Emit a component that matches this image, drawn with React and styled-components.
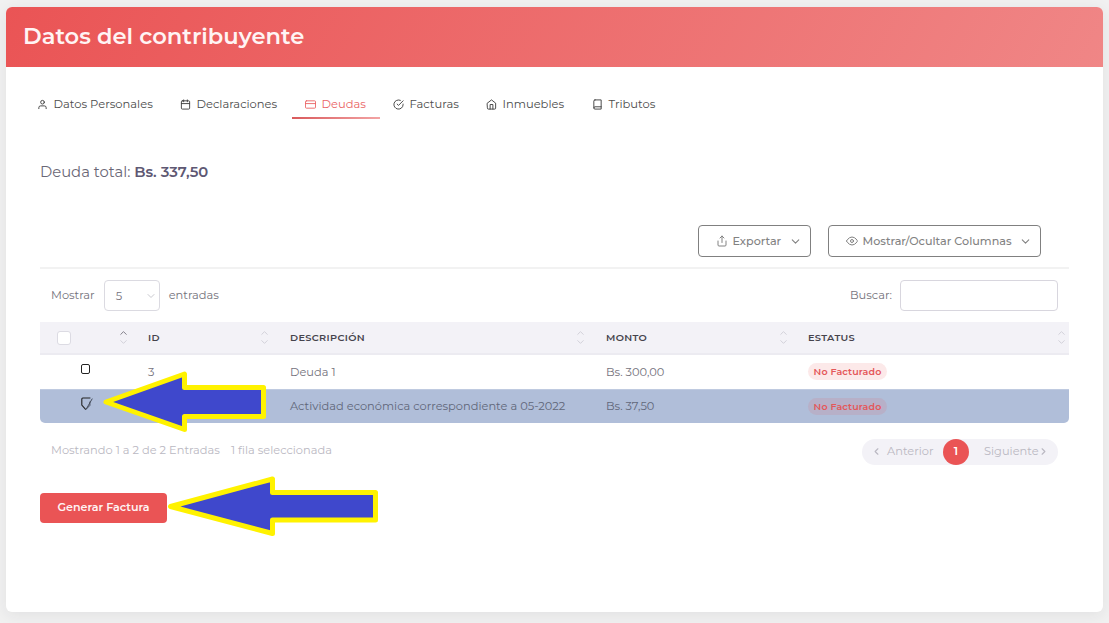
import React from "react";
import styled, { createGlobalStyle, css } from "styled-components";
import {
  FiUser,
  FiCalendar,
  FiCreditCard,
  FiCheckCircle,
  FiHome,
  FiBook,
  FiShare,
  FiEye,
  FiChevronDown,
  FiChevronUp,
  FiChevronLeft,
  FiChevronRight,
} from "react-icons/fi";

const GlobalStyle = createGlobalStyle`
  * { box-sizing: border-box; }
  body {
    margin: 0;
    background: #f1f1f1;
    font-family: Montserrat, Inter, "Liberation Sans", sans-serif;
    font-size: 11.42px;
    color: #74727c;
  }
`;

const Page = styled.div`
  height: 623px;
  padding: 7px 6px 11px;
  overflow: hidden;
`;

const Card = styled.main`
  height: 605px;
  background: #fff;
  border-radius: 6px;
  box-shadow: 0 3px 16px rgba(34, 41, 47, 0.08);
`;

const Header = styled.header`
  height: 60px;
  padding: 0 17px 3px;
  display: flex;
  align-items: center;
  border-radius: 6px 6px 0 0;
  background: linear-gradient(118deg, #ea5455, #f08686);
`;

const Title = styled.h1`
  margin: 0;
  font-size: 22.6px;
  line-height: 30px;
  font-weight: 600;
  color: #fff4f4;
`;

const Tabs = styled.nav`
  display: flex;
  padding: 22px 18px 0;
`;

const Tab = styled.a`
  width: ${(p) => p.$w}px;
  height: 30px;
  padding: 2px 0 0 13px;
  display: flex;
  align-items: center;
  gap: 5.5px;
  font-size: 11.5px;
  color: #4c4c4c;
  border-bottom: 2px solid transparent;
  svg { width: 11px; height: 11px; flex: none; color: #3c3c3c; }
  ${(p) =>
    p.$active &&
    css`
      color: #ea6465;
      border-image: linear-gradient(90deg, #d9595b, #f3a5a5) 1;
      svg { color: #ea6465; }
    `}
`;

const Body = styled.section`
  padding: 0 34px;
`;

const Total = styled.p`
  margin: 0;
  padding-top: 43px;
  line-height: 20px;
  font-size: 14.8px;
  color: #6a6776;
  strong { font-weight: 600; color: #5e5873; }
`;

const Actions = styled.div`
  display: flex;
  justify-content: flex-end;
  gap: 17px;
  margin-top: 43px;
  padding: 0 28px 10px 0;
  border-bottom: 2px solid #f2f2f2;
`;

const OutlineButton = styled.button`
  width: ${(p) => p.$w}px;
  height: 32px;
  padding: 0 8px 0 16.5px;
  display: flex;
  align-items: center;
  border: 1px solid #808080;
  border-radius: 4px;
  background: #fff;
  font: 500 11.2px/16px Montserrat, Inter, sans-serif;
  white-space: nowrap;
  color: #828282;
  span { margin-left: 5px; }
  svg { width: 12px; height: 12px; flex: none; }
  svg:last-child { margin-left: auto; width: 13px; height: 13px; }
`;

const Controls = styled.div`
  height: 53px;
  padding: 0 11px 1px;
  display: flex;
  align-items: center;
  justify-content: space-between;
`;

const Control = styled.label`
  display: flex;
  align-items: center;
  gap: ${(p) => p.$gap}px;
`;

const SelectBox = styled.span`
  width: 56px;
  height: 31px;
  padding: 1px 2px 0 11px;
  display: flex;
  align-items: center;
  justify-content: space-between;
  border: 1px solid #dbdae1;
  border-radius: 4px;
  svg { width: 12px; height: 12px; color: #c9c9cf; }
`;

const SearchInput = styled.input`
  width: 158px;
  height: 31px;
  border: 1px solid #d8d6de;
  border-radius: 4px;
  background: #fff;
`;

const Row = styled.div`
  display: grid;
  grid-template-columns: 96px 142px 316px 202px 273px;
  align-items: center;
  height: ${(p) => p.$h}px;
`;

const HeadRow = styled(Row)`
  background: #f3f2f7;
  border-bottom: 2px solid #ecebf1;
`;

const BodyRow = styled(Row)`
  ${(p) =>
    p.$selected &&
    css`
      background: #b0bed9;
      border-radius: 0 0 5px 5px;
      border-top: 1px solid #bfcae0;
      color: #61677a;
    `}
`;

const HeadCell = styled.div`
  display: flex;
  align-items: center;
  justify-content: space-between;
  padding: 0 ${(p) => p.$end}px 0 ${(p) => p.$start || 12}px;
  font-size: 9.75px;
  font-weight: 600;
  letter-spacing: 0.34px;
  color: #45434c;
`;

const Cell = styled.div`
  padding: 0 0 1px 12px;
  white-space: nowrap;
`;

const CheckCell = styled.div`
  padding: 0 0 6px 41px;
  line-height: 0;
`;

const HeadCheck = styled.span`
  width: 14px;
  height: 14px;
  background: #fff;
  border: 1px solid #dcdbe3;
  border-radius: 3px;
`;

const EmptyCheck = styled.span`
  display: inline-block;
  width: 9px;
  height: 10px;
  background: #fff;
  border: 1px solid #222;
  border-radius: 2px;
`;

const SortIcon = styled.span`
  display: flex;
  flex-direction: column;
  color: #cfced6;
  svg { width: 11px; height: 12px; display: block; }
  svg:first-child { margin-bottom: -3px; color: ${(p) => (p.$asc ? "#77757f" : "#cfced6")}; }
`;

const Badge = styled.span`
  display: inline-flex;
  align-items: center;
  justify-content: center;
  width: 79px;
  height: 17px;
  border-radius: 9px;
  background: rgba(234, 84, 85, 0.13);
  font-size: 9.5px;
  font-weight: 600;
  letter-spacing: 0.14px;
  color: #e4585a;
`;

const Footer = styled.div`
  height: 57px;
  padding: 0 11px;
  display: flex;
  align-items: center;
  justify-content: space-between;
  color: #bab8c2;
`;

const Info = styled.div`
  display: flex;
  gap: 11px;
  padding-bottom: 3px;
`;

const Pagination = styled.div`
  width: 196px;
  height: 26px;
  display: flex;
  align-items: center;
  border-radius: 13px;
  background: #f3f2f7;
`;

const PageLink = styled.span`
  display: flex;
  align-items: center;
  width: ${(p) => p.$w}px;
  padding: 0 0 1px ${(p) => p.$pad}px;
  gap: ${(p) => p.$gap}px;
  svg { width: 11px; height: 11px; stroke-width: 2.5; flex: none; }
  svg:last-child { margin-left: -1px; }
`;

const CurrentPage = styled.span`
  width: 26px;
  height: 26px;
  display: grid;
  place-items: center;
  border-radius: 50%;
  background: #ea5455;
  color: #fff;
  font-weight: 600;
  padding-bottom: 1px;
`;

const PrimaryButton = styled.button`
  width: 127px;
  height: 30px;
  display: block;
  margin-top: 13px;
  padding: 0 0 3px;
  border: 0;
  border-radius: 4px;
  background: #ea5455;
  color: #fff3f3;
  font: 600 11.1px/16px Montserrat, Inter, sans-serif;
`;

const Overlay = styled.svg`
  position: absolute;
  left: 0;
  top: 0;
  pointer-events: none;
`;

const tabs = [
  { icon: FiUser, label: "Datos Personales", w: 143 },
  { icon: FiCalendar, label: "Declaraciones", w: 125 },
  { icon: FiCreditCard, label: "Deudas", w: 88, active: true },
  { icon: FiCheckCircle, label: "Facturas", w: 93 },
  { icon: FiHome, label: "Inmuebles", w: 106 },
  { icon: FiBook, label: "Tributos", w: 90 },
];

const columns = [
  { label: "ID", end: 8 },
  { label: "DESCRIPCIÓN", end: 8 },
  { label: "MONTO", end: 7 },
  { label: "ESTATUS", end: 2 },
];

const rows = [
  { id: "3", description: "Deuda 1", amount: "Bs. 300,00", status: "No Facturado" },
  {
    id: "4",
    description: "Actividad económica correspondiente a 05-2022",
    amount: "Bs. 37,50",
    status: "No Facturado",
    selected: true,
  },
];

function Sort({ asc }) {
  return (
    <SortIcon $asc={asc}>
      <FiChevronUp />
      <FiChevronDown />
    </SortIcon>
  );
}

function CheckedMark() {
  return (
    <svg width="13" height="14" viewBox="0 0 13 14" fill="none">
      <path d="M9.4 1H1.8Q.8 1 .8 2V8L4.8 12.6" stroke="#222" strokeWidth="1.1" />
      <path d="M4.8 12.8L11.3 1.6M5.4 12L8.9 8.4V4.6" stroke="#444b5a" strokeWidth="1" />
    </svg>
  );
}

function Arrow({ points }) {
  return <polygon points={points} fill="#3f48cc" stroke="#fff200" strokeWidth="5" />;
}

export default function App() {
  return (
    <>
      <GlobalStyle />
      <Page>
        <Card>
          <Header>
            <Title>Datos del contribuyente</Title>
          </Header>
          <Tabs>
            {tabs.map(({ icon: Icon, label, w, active }) => (
              <Tab key={label} $w={w} $active={active}>
                <Icon />
                {label}
              </Tab>
            ))}
          </Tabs>
          <Body>
            <Total>
              Deuda total: <strong>Bs. 337,50</strong>
            </Total>
            <Actions>
              <OutlineButton $w={113}>
                <FiShare />
                <span>Exportar</span>
                <FiChevronDown />
              </OutlineButton>
              <OutlineButton $w={213}>
                <FiEye />
                <span>Mostrar/Ocultar Columnas</span>
                <FiChevronDown />
              </OutlineButton>
            </Actions>
            <Controls>
              <Control $gap={9}>
                Mostrar
                <SelectBox>
                  5<FiChevronDown />
                </SelectBox>
                entradas
              </Control>
              <Control $gap={8}>
                Buscar:
                <SearchInput />
              </Control>
            </Controls>
            <HeadRow $h={33}>
              <HeadCell $start={17} $end={7}>
                <HeadCheck />
                <Sort asc />
              </HeadCell>
              {columns.map((c) => (
                <HeadCell key={c.label} $end={c.end}>
                  {c.label}
                  <Sort />
                </HeadCell>
              ))}
            </HeadRow>
            {rows.map((r) => (
              <BodyRow key={r.id} $h={34} $selected={r.selected}>
                <CheckCell>{r.selected ? <CheckedMark /> : <EmptyCheck />}</CheckCell>
                <Cell>{r.selected ? null : r.id}</Cell>
                <Cell>{r.description}</Cell>
                <Cell>{r.amount}</Cell>
                <Cell>
                  <Badge>{r.status}</Badge>
                </Cell>
              </BodyRow>
            ))}
            <Footer>
              <Info>
                <span>Mostrando 1 a 2 de 2 Entradas</span>
                <span>1 fila seleccionada</span>
              </Info>
              <Pagination>
                <PageLink $w={81} $pad={9} $gap={5}>
                  <FiChevronLeft />
                  <span>Anterior</span>
                </PageLink>
                <CurrentPage>1</CurrentPage>
                <PageLink $w={89} $pad={15} $gap={0}>
                  <span>Siguiente</span>
                  <FiChevronRight />
                </PageLink>
              </Pagination>
            </Footer>
            <PrimaryButton>Generar Factura</PrimaryButton>
          </Body>
        </Card>
      </Page>
      <Overlay width="1109" height="623" viewBox="0 0 1109 623" strokeLinejoin="round">
        <Arrow points="106,402 184.5,374 184.5,387.5 263.5,387.5 263.5,416.5 184.5,416.5 184.5,429.5" />
        <Arrow points="170.5,506.5 272.5,479 272.5,492.5 375.5,492.5 375.5,520 272.5,520 272.5,533.5" />
      </Overlay>
    </>
  );
}
